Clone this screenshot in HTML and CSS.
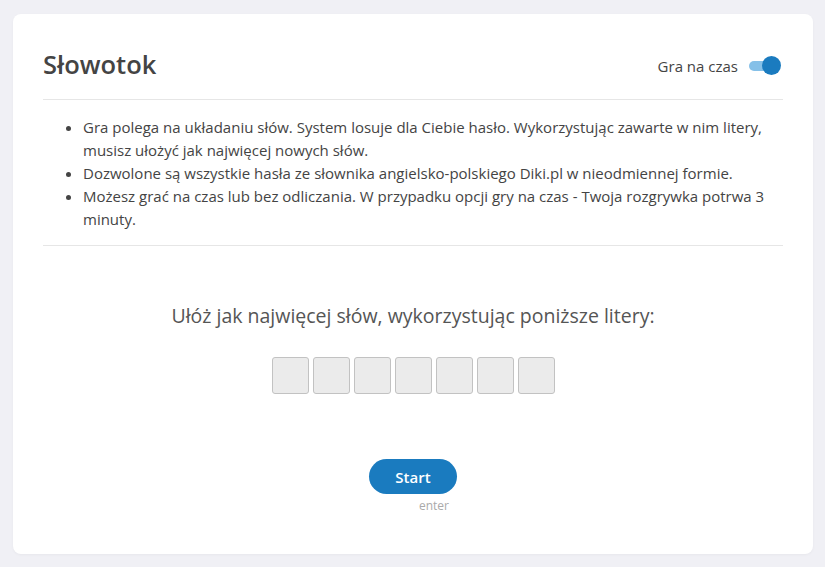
FILE: index.html
```html
<!DOCTYPE html>
<html>
<head>
<meta charset="UTF-8"/>
<title>Słowotok</title>
<link rel="stylesheet" href="styles.css">
</head>
<body>
<div class="card">
	<div class="header">
		<h1>Słowotok</h1>
		<label class="timer">Gra na czas <span class="toggle"><span class="knob"></span></span></label>
	</div>
	<ul class="rules">
		<li>Gra polega na układaniu słów. System losuje dla Ciebie hasło. Wykorzystując zawarte w nim litery, musisz ułożyć jak najwięcej nowych słów.</li>
		<li>Dozwolone są wszystkie hasła ze słownika angielsko-polskiego Diki.pl w nieodmiennej formie.</li>
		<li>Możesz grać na czas lub bez odliczania. W przypadku opcji gry na czas - Twoja rozgrywka potrwa 3 minuty.</li>
	</ul>
	<div class="game">
		<h2>Ułóż jak najwięcej słów, wykorzystując poniższe litery:</h2>
		<div class="letters">
			<span class="tile"></span><span class="tile"></span><span class="tile"></span><span class="tile"></span><span class="tile"></span><span class="tile"></span><span class="tile"></span>
		</div>
		<div class="actions">
			<button class="start">Start</button>
			<span class="hint">enter</span>
		</div>
	</div>
</div>
</body>
</html>
```

FILE: styles.css
```css
html, body { margin: 0; }
body {
	background: #f0f0f5;
	font-family: 'Open Sans', sans-serif;
	color: #444;
	padding: 14px 12px 13px 13px;
}
.card {
	background: #fff;
	border-radius: 8px;
	padding: 0 30px;
	height: 540px;
	box-sizing: border-box;
	box-shadow: 0 1px 3px rgba(0,0,0,0.04);
}
.header {
	display: flex; align-items: center; justify-content: space-between;
	height: 86px; box-sizing: border-box; padding-top: 18px;
	border-bottom: 1px solid #e6e6e6;
}
h1 { margin: -3px 0 0; font-size: 25.5px; font-weight: 600; color: #444; line-height: 30px; }
.timer { font-size: 15px; color: #444; display: flex; align-items: center; }
.toggle {
	position: relative; display: inline-block;
	width: 28px; height: 10px; margin: 0 6px 0 11px;
	background: #85c0e8; border-radius: 5px;
}
.knob {
	position: absolute; right: -4px; top: -5px;
	width: 19px; height: 19px; border-radius: 50%;
	background: #1a7bbf;
}
.rules {
	margin: 0; padding: 16px 0 14px 40px;
	font-size: 15px; line-height: 23px;
	border-bottom: 1px solid #e6e6e6;
}
.game { text-align: center; }
h2 { margin: 55px 0 0; font-size: 19.5px; font-weight: 400; color: #555; line-height: 30px; }
.letters { display: flex; justify-content: center; gap: 4px; margin-top: 26px; }
.tile {
	width: 35px; height: 35px;
	background: #ebebeb; border: 1px solid #c2c2c2; border-radius: 3px;
}
.actions { display: flex; flex-direction: column; align-items: center; margin-top: 65px; }
.start {
	width: 88px; height: 35px;
	background: #1a7bbf; color: #fff; border: none; border-radius: 18px;
	font-family: 'Open Sans', sans-serif; font-size: 15px; font-weight: 600;
}
.hint { font-size: 12px; color: #aaa; margin-left: 42px; line-height: 16px; margin-top: 4px; }
```
